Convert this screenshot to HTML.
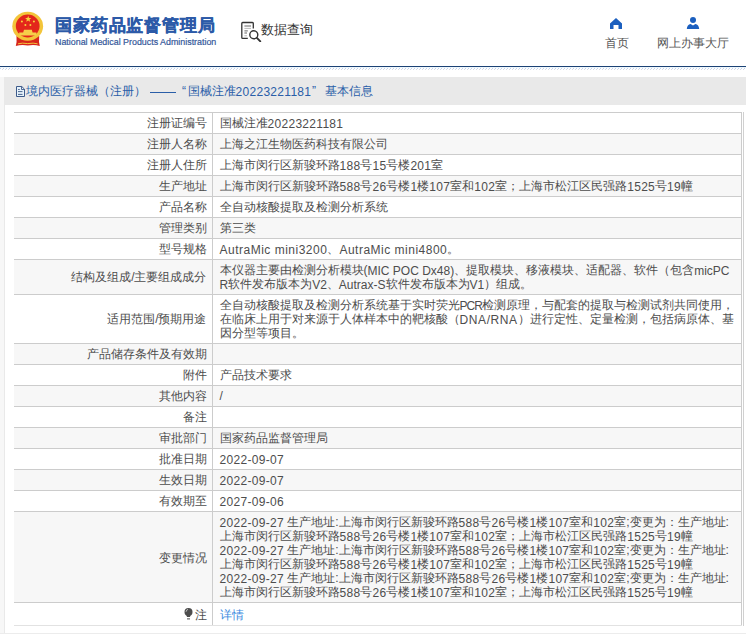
<!DOCTYPE html>
<html><head><meta charset="utf-8">
<style>
*{margin:0;padding:0;box-sizing:border-box}
html,body{width:746px;height:634px;overflow:hidden;background:#fff;font-family:"Liberation Sans",sans-serif;color:#333}
.hdr{position:absolute;left:0;top:0;width:746px;height:66px;background:#fff}
.emb{position:absolute;left:11px;top:10px;width:34px;height:36px}
.t1{position:absolute;left:55px;top:15.5px;font-size:17px;letter-spacing:0.85px;font-weight:bold;color:#2c5aa8;white-space:nowrap;line-height:20px;-webkit-text-stroke:0.35px #2c5aa8}
.t2{position:absolute;left:55px;top:37px;font-size:8.9px;color:#34589a;white-space:nowrap;line-height:10px;-webkit-text-stroke:0.2px #34589a}
.sq{position:absolute;left:241px;top:22px}
.sqt{position:absolute;left:261px;top:20.5px;font-size:13px;color:#333;line-height:18px;white-space:nowrap}
.nav1{position:absolute;left:605px;top:35px;font-size:12px;color:#555;line-height:16px;white-space:nowrap}
.nav2{position:absolute;left:657px;top:35px;font-size:12px;color:#555;line-height:16px;white-space:nowrap}
.bline{position:absolute;left:0;top:66px;width:746px;height:1px;background:#1c4275}
.hatch{position:absolute;left:0;top:67px;width:746px;height:3px;background:repeating-linear-gradient(135deg,#cfe0f5 0 1px,#fff 1px 4px)}
.lside{position:absolute;left:0;top:77px;width:4px;height:557px;background:#f7f7f7}
.lline{position:absolute;left:4px;top:77px;width:1px;height:557px;background:#e9e9e9}
.rline{position:absolute;left:743px;top:112px;width:1px;height:514px;background:#d0d0d0}
.bot{position:absolute;left:0;top:633px;width:746px;height:1px;background:#ececec}
.bar{position:absolute;left:4px;top:77px;width:742px;height:28px;background:#e9e9e9}
.bart{position:absolute;left:26px;top:83px;font-size:12px;color:#2a5ea8;line-height:16px;white-space:nowrap}
table{position:absolute;left:14px;top:112px;width:728px;color:#4d4d4d;border-collapse:collapse;table-layout:fixed;font-size:12px;line-height:14px}
td{border-top:1px solid #ccc;border-bottom:1px solid #ccc;padding:3px 7px;vertical-align:middle;white-space:nowrap;overflow:visible}
td.l{width:198px;text-align:right;border-right:1px solid #ccc;padding-right:5px}
td.v{border-right:1px solid #ccc}
tr:nth-child(even) td{background:#f7f7f7}
.lnk{color:#3a8ae0}
tr.last td{padding-top:5px;padding-bottom:3px;border-bottom-color:#e2e2e2}
.e{letter-spacing:0.5px;position:relative;top:1px}
.d{letter-spacing:0.3px;position:relative;top:1px}
.u{letter-spacing:0;position:relative;top:1px}
</style></head><body>
<div class="hdr">
<svg style="position:absolute;left:0;top:0" width="56" height="50" viewBox="0 0 56 50">
<path d="M16.5 36 Q17 42 15.8 46 Q22 44 27.8 45.6 Q33.5 44 39.8 46 Q38.6 42 39.2 36Z" fill="#d8261c"/>
<ellipse cx="27.7" cy="26.3" rx="15.4" ry="14.5" fill="#f3c53a"/>
<ellipse cx="27.7" cy="26" rx="11.9" ry="11.4" fill="#e3261b"/>
<path d="M24 29.8 H31.8 L32.6 32.6 H36.4 V35.6 H19.2 V32.6 H23.2Z" fill="#f6cf4a"/>
<path d="M21 38.2 Q24.5 36.5 27.8 39 Q31 36.5 34.6 38.2 Q31 40.2 27.8 39.8 Q24.5 40.2 21 38.2Z" fill="#f3c53a"/>
<path d="M18 43.8 Q22 42.6 27.8 43.6 Q33.5 42.6 37.6 43.8" fill="none" stroke="#f3c53a" stroke-width="1"/>
<polygon points="28.2,15.8 29,18 31.3,18.1 29.5,19.5 30.1,21.7 28.2,20.4 26.3,21.7 26.9,19.5 25.1,18.1 27.4,18" fill="#f7d23c"/>
<circle cx="21.9" cy="21.6" r="1" fill="#f7d23c"/>
<circle cx="25.4" cy="24.9" r="1" fill="#f7d23c"/>
<circle cx="30.4" cy="24.9" r="1" fill="#f7d23c"/>
<circle cx="33.9" cy="21.6" r="1" fill="#f7d23c"/>
</svg>
<div class="t1">国家药品监督管理局</div>
<div class="t2">National Medical Products Administration</div>
<svg style="position:absolute;left:241px;top:21px" width="21" height="21" viewBox="0 0 21 21"><g transform="translate(0,0.6)"><path d="M12.3 6.8 V1.8 Q12.3 0.9 11.4 0.9 H1.7 Q0.8 0.9 0.8 1.8 V15.8 Q0.8 16.7 1.7 16.7 H6.8" fill="none" stroke="#333" stroke-width="1.3"/><path d="M3.4 4.4h6.6M3.4 9.3h3.4M3.4 11.4h2.6" stroke="#555" stroke-width="0.9"/><path d="M3.4 6.8h6.6M3.4 14.2h2.6" stroke="#b0b0b0" stroke-width="0.9"/><circle cx="12.8" cy="13.2" r="4" fill="#fff" stroke="#333" stroke-width="1.4"/><path d="M15.9 16.3 L19.3 19.7" stroke="#333" stroke-width="1.9" stroke-linecap="round"/></g></svg>
<div class="sqt">数据查询</div>
<svg style="position:absolute;left:610px;top:18px" width="12" height="11" viewBox="0 0 12 11"><path d="M6 0 L12 5.5 V11 H8.5 V7 H3.5 V11 H0 V5.5Z" fill="#1b5fbf"/></svg>
<svg style="position:absolute;left:686px;top:17px" width="14" height="12" viewBox="0 0 14 12"><circle cx="7" cy="3" r="3" fill="#1b5fbf"/><path d="M0.8 12 Q1.2 7.4 4.6 6.9 L7 8.6 L9.4 6.9 Q12.8 7.4 13.2 12Z" fill="#1b5fbf"/></svg>
<div class="nav1">首页</div>
<div class="nav2">网上办事大厅</div>
</div>
<div class="bline"></div>
<svg style="position:absolute;left:0;top:67px" width="746" height="4"><defs><pattern id="hp" width="3" height="4" patternUnits="userSpaceOnUse"><rect x="0" y="0" width="3" height="1" fill="#eef7fb"/><rect x="0" y="1" width="1" height="1" fill="#bfd2f0"/><rect x="2" y="2" width="1" height="1" fill="#d9dbe3"/></pattern></defs><rect width="746" height="4" fill="url(#hp)"/></svg>
<div class="lside"></div><div class="lline"></div><div class="rline"></div><div class="bot"></div>
<div class="bar"></div>
<svg style="position:absolute;left:15px;top:85px" width="11" height="13" viewBox="0 0 11 13"><path d="M1.5 1.5 H6.8 L9.5 4.2 V11.5 H1.5Z" fill="#e6f2fb" stroke="#3d5a8a" stroke-width="1"/><path d="M6.5 1.5 V4.5 H9.5" fill="none" stroke="#3d5a8a" stroke-width="0.9"/><path d="M3 4.5h1.8M3 6.5h4.5M3 9.5h4.5" stroke="#4a6590" stroke-width="0.9"/><path d="M3 8h4.5" stroke="#b9c6d8" stroke-width="0.8"/></svg>
<div class="bart" style="left:25.5px">境内医疗器械（注册）</div>
<div style="position:absolute;left:149.7px;top:92px;width:26.3px;height:1px;background:#2a5ea8"></div>
<div class="bart" style="left:182px">“</div>
<div class="bart" style="left:187.5px">国械注准<span class="d">20223221181</span></div>
<div class="bart" style="left:312px">”</div>
<div class="bart" style="left:324.8px">基本信息</div>
<table>
<tr><td class="l">注册证编号</td><td class="v">国械注准<span class="d">20223221181</span></td></tr>
<tr><td class="l">注册人名称</td><td class="v">上海之江生物医药科技有限公司</td></tr>
<tr><td class="l">注册人住所</td><td class="v">上海市闵行区新骏环路<span class="d">188</span>号<span class="d">15</span>号楼<span class="d">201</span>室</td></tr>
<tr><td class="l">生产地址</td><td class="v">上海市闵行区新骏环路<span class="d">588</span>号<span class="d">26</span>号楼<span class="d">1</span>楼<span class="d">107</span>室和<span class="d">102</span>室；上海市松江区民强路<span class="d">1525</span>号<span class="d">19</span>幢</td></tr>
<tr><td class="l">产品名称</td><td class="v">全自动核酸提取及检测分析系统</td></tr>
<tr><td class="l">管理类别</td><td class="v">第三类</td></tr>
<tr><td class="l">型号规格</td><td class="v"><span class="e">AutraMic mini3200</span>、<span class="e">AutraMic mini4800</span>。</td></tr>
<tr><td class="l">结构及组成/主要组成成分</td><td class="v">本仪器主要由检测分析模块(<span class="u">MIC POC Dx48)</span>、提取模块、移液模块、适配器、软件（包含<span class="u">micPC</span><br><span class="u">R</span>软件发布版本为<span class="u">V2</span>、<span class="u">Autrax-S</span>软件发布版本为<span class="u">V1</span>）组成。</td></tr>
<tr><td class="l">适用范围/预期用途</td><td class="v">全自动核酸提取及检测分析系统基于实时荧光<span class="u" style="letter-spacing:-1px">PCR</span>检测原理，与配套的提取与检测试剂共同使用，<br>在临床上用于对来源于人体样本中的靶核酸（<span class="u" style="letter-spacing:0.6px">DNA/RNA</span>）进行定性、定量检测，包括病原体、基<br>因分型等项目。</td></tr>
<tr><td class="l">产品储存条件及有效期</td><td class="v"></td></tr>
<tr><td class="l">附件</td><td class="v">产品技术要求</td></tr>
<tr><td class="l">其他内容</td><td class="v">/</td></tr>
<tr><td class="l">备注</td><td class="v"></td></tr>
<tr><td class="l">审批部门</td><td class="v">国家药品监督管理局</td></tr>
<tr><td class="l">批准日期</td><td class="v"><span class="d">2022-09-07</span></td></tr>
<tr><td class="l">生效日期</td><td class="v"><span class="d">2022-09-07</span></td></tr>
<tr><td class="l">有效期至</td><td class="v"><span class="d">2027-09-06</span></td></tr>
<tr><td class="l" style="padding-top:4px;padding-bottom:2px">变更情况</td><td class="v"><span class="d">2022-09-27</span> 生产地址:上海市闵行区新骏环路<span class="d">588</span>号<span class="d">26</span>号楼<span class="d">1</span>楼<span class="d">107</span>室和<span class="d">102</span>室;变更为：生产地址:<br>上海市闵行区新骏环路<span class="d">588</span>号<span class="d">26</span>号楼<span class="d">1</span>楼<span class="d">107</span>室和<span class="d">102</span>室；上海市松江区民强路<span class="d">1525</span>号<span class="d">19</span>幢<br><span class="d">2022-09-27</span> 生产地址:上海市闵行区新骏环路<span class="d">588</span>号<span class="d">26</span>号楼<span class="d">1</span>楼<span class="d">107</span>室和<span class="d">102</span>室;变更为：生产地址:<br>上海市闵行区新骏环路<span class="d">588</span>号<span class="d">26</span>号楼<span class="d">1</span>楼<span class="d">107</span>室和<span class="d">102</span>室；上海市松江区民强路<span class="d">1525</span>号<span class="d">19</span>幢<br><span class="d">2022-09-27</span> 生产地址:上海市闵行区新骏环路<span class="d">588</span>号<span class="d">26</span>号楼<span class="d">1</span>楼<span class="d">107</span>室和<span class="d">102</span>室;变更为：生产地址:<br>上海市闵行区新骏环路<span class="d">588</span>号<span class="d">26</span>号楼<span class="d">1</span>楼<span class="d">107</span>室和<span class="d">102</span>室；上海市松江区民强路<span class="d">1525</span>号<span class="d">19</span>幢</td></tr>
<tr class="last"><td class="l"><svg width="9" height="12" viewBox="0 0 9 12" style="vertical-align:-1px;margin-right:2px"><circle cx="4.5" cy="4" r="4" fill="#4d4d4d"/><path d="M2.3 6.5 H6.7 L6 9 H3Z" fill="#4d4d4d"/><path d="M3 10.9 H6" stroke="#4d4d4d" stroke-width="1"/><path d="M2 3.8 Q2.2 1.8 4 1.4" fill="none" stroke="#ddd" stroke-width="0.8"/></svg>注</td><td class="v"><span class="lnk">详情</span></td></tr>
</table>
</body></html>
